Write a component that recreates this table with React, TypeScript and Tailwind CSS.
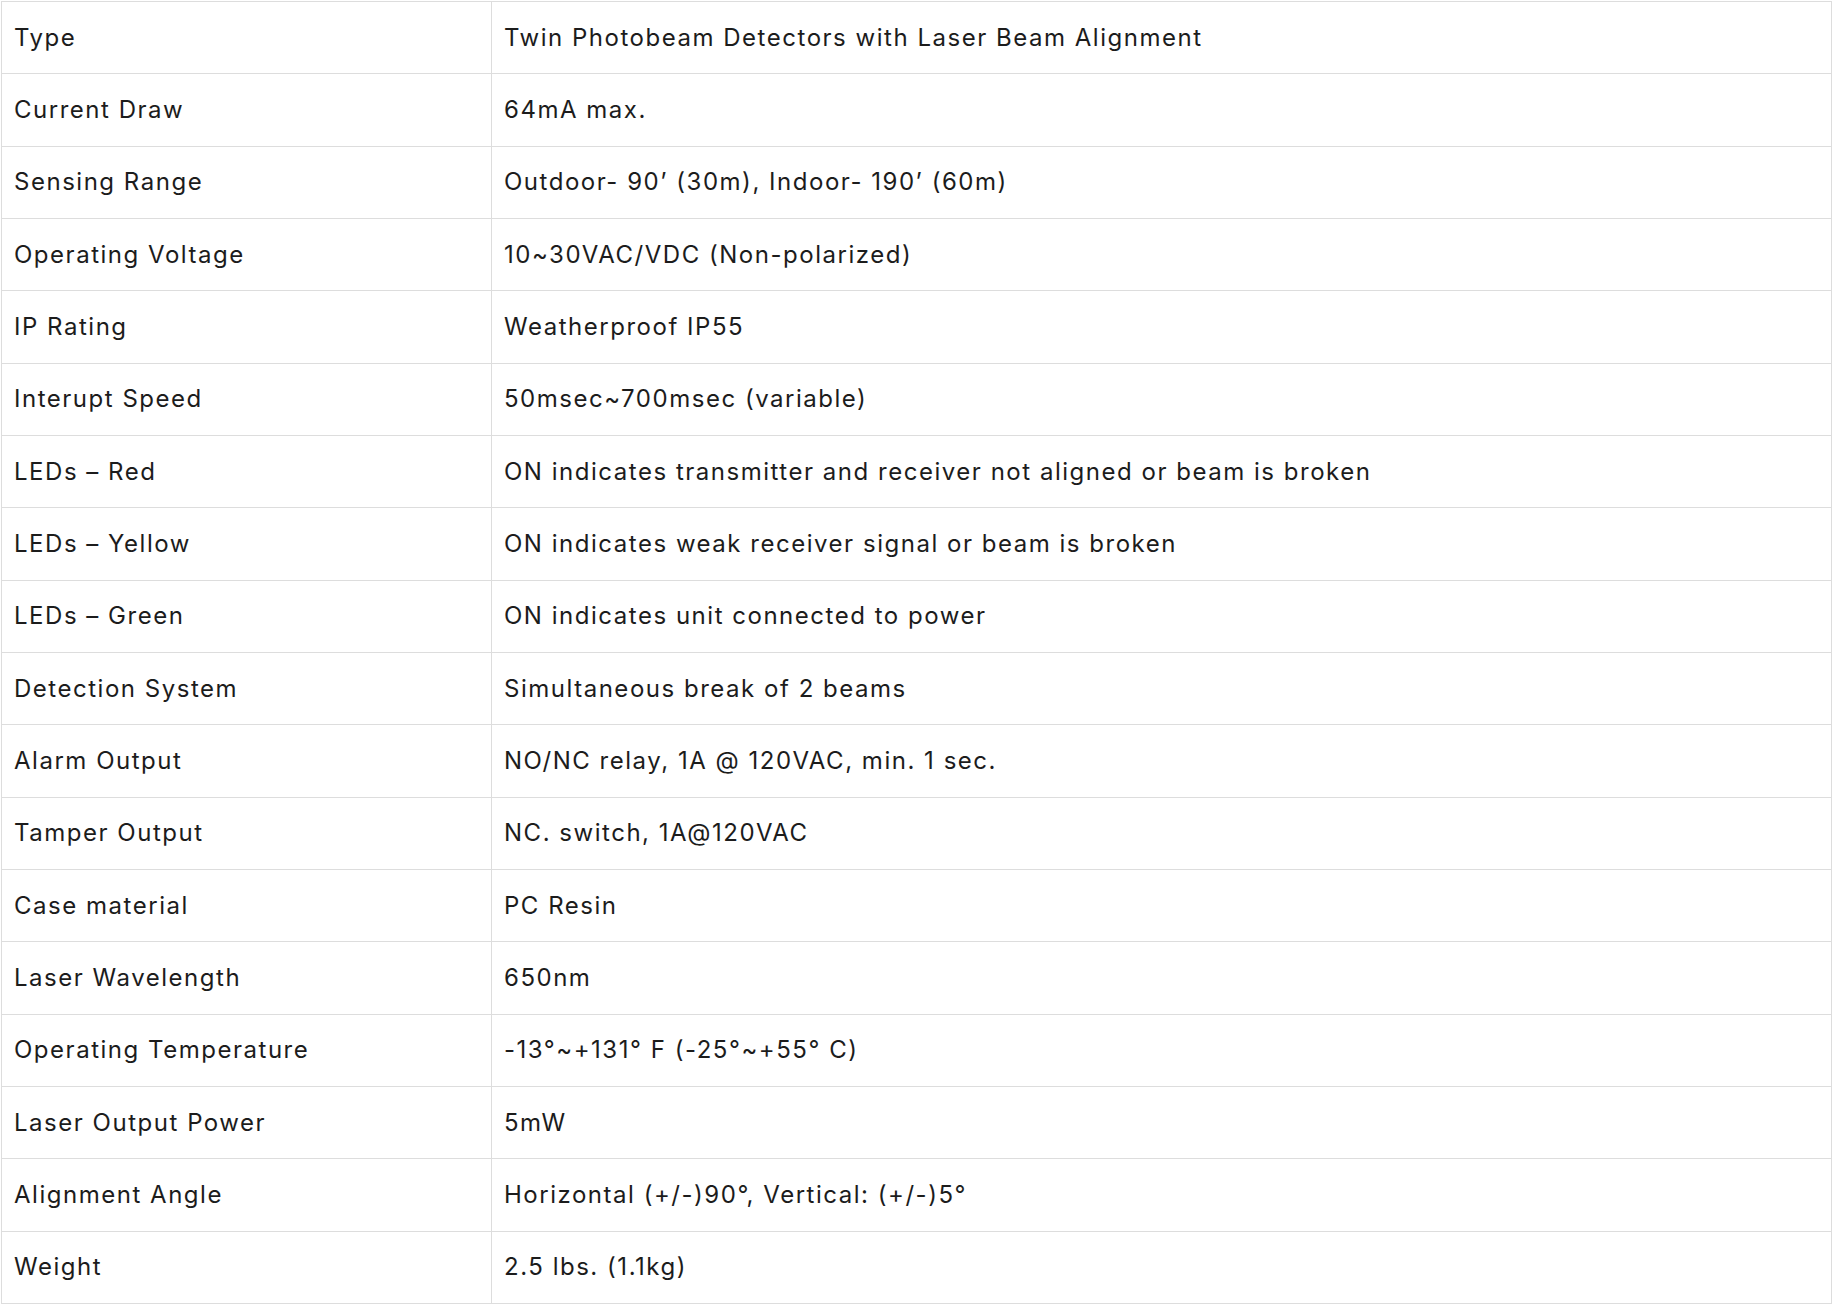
const specs: [string, string][] = [
  ['Type', 'Twin Photobeam Detectors with Laser Beam Alignment'],
  ['Current Draw', '64mA max.'],
  ['Sensing Range', 'Outdoor- 90’ (30m), Indoor- 190’ (60m)'],
  ['Operating Voltage', '10~30VAC/VDC (Non-polarized)'],
  ['IP Rating', 'Weatherproof IP55'],
  ['Interupt Speed', '50msec~700msec (variable)'],
  ['LEDs – Red', 'ON indicates transmitter and receiver not aligned or beam is broken'],
  ['LEDs – Yellow', 'ON indicates weak receiver signal or beam is broken'],
  ['LEDs – Green', 'ON indicates unit connected to power'],
  ['Detection System', 'Simultaneous break of 2 beams'],
  ['Alarm Output', 'NO/NC relay, 1A @ 120VAC, min. 1 sec.'],
  ['Tamper Output', 'NC. switch, 1A@120VAC'],
  ['Case material', 'PC Resin'],
  ['Laser Wavelength', '650nm'],
  ['Operating Temperature', '-13°~+131° F (-25°~+55° C)'],
  ['Laser Output Power', '5mW'],
  ['Alignment Angle', 'Horizontal (+/-)90°, Vertical: (+/-)5°'],
  ['Weight', '2.5 lbs. (1.1kg)'],
];

export default function App() {
  return (
    <div className="bg-white p-px font-['Inter',sans-serif] text-[24px] leading-9 tracking-[1.52px] text-[#1c1c1c]">
      <div className="border-x border-t border-[#dddddd]">
        {specs.map(([label, value]) => (
          <div
            key={label}
            className="grid h-[72.33px] grid-cols-[490px_1fr] border-b border-[#dddddd]"
          >
            <div className="flex items-center border-r border-[#dddddd] px-3">{label}</div>
            <div className="flex items-center px-3">{value}</div>
          </div>
        ))}
      </div>
    </div>
  );
}
